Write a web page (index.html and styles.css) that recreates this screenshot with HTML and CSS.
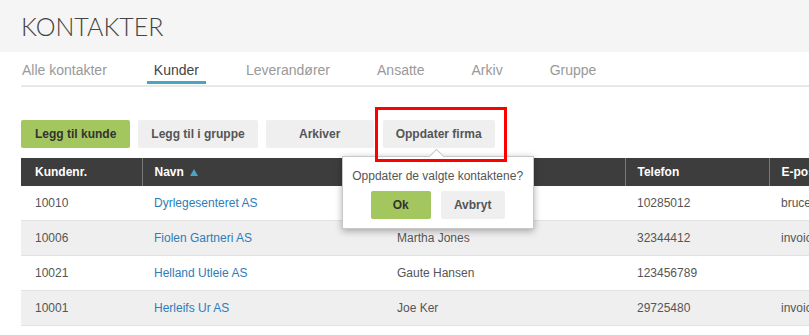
FILE: index.html
```html
<!DOCTYPE html>
<html>
  <head>
    <title>Kontakter</title>
    <link rel="stylesheet" href="styles.css">
  </head>
  <body>
    <header class="page-header">
      <h1>KONTAKTER</h1>
    </header>

    <nav class="tabs">
      <div class="tab-list">
        <a class="tab" href="#">Alle kontakter</a>
        <a class="tab active" href="#">Kunder</a>
        <a class="tab" href="#">Leverandører</a>
        <a class="tab" href="#">Ansatte</a>
        <a class="tab" href="#">Arkiv</a>
        <a class="tab" href="#">Gruppe</a>
      </div>
    </nav>

    <div class="content">
      <div class="toolbar">
        <button class="btn btn-green">Legg til kunde</button>
        <button class="btn">Legg til i gruppe</button>
        <button class="btn">Arkiver</button>
        <div class="confirm">
          <button class="btn">Oppdater firma</button>
          <div class="popover">
            <span class="popover-arrow"></span>
            <p class="popover-text">Oppdater de valgte kontaktene?</p>
            <div class="popover-actions">
              <button class="btn btn-green btn-ok">Ok</button>
              <button class="btn btn-cancel">Avbryt</button>
            </div>
          </div>
          <div class="highlight"></div>
        </div>
      </div>

      <table class="contacts">
        <colgroup>
          <col class="col-nr">
          <col class="col-name">
          <col class="col-person">
          <col class="col-phone">
          <col class="col-mail">
        </colgroup>
        <thead>
          <tr>
            <th>Kundenr.</th>
            <th>Navn <span class="sort-up"></span></th>
            <th>Kontaktperson</th>
            <th>Telefon</th>
            <th>E-post</th>
          </tr>
        </thead>
        <tbody>
          <tr>
            <td>10010</td>
            <td><a href="#">Dyrlegesenteret AS</a></td>
            <td>Bruce Wayne</td>
            <td>10285012</td>
            <td>bruce@dyrlegesenteret.no</td>
          </tr>
          <tr>
            <td>10006</td>
            <td><a href="#">Fiolen Gartneri AS</a></td>
            <td>Martha Jones</td>
            <td>32344412</td>
            <td>invoice@fiolen.no</td>
          </tr>
          <tr>
            <td>10021</td>
            <td><a href="#">Helland Utleie AS</a></td>
            <td>Gaute Hansen</td>
            <td>123456789</td>
            <td></td>
          </tr>
          <tr>
            <td>10001</td>
            <td><a href="#">Herleifs Ur AS</a></td>
            <td>Joe Ker</td>
            <td>29725480</td>
            <td>invoice@herleifsur.no</td>
          </tr>
        </tbody>
      </table>
    </div>
  </body>
</html>
```

FILE: styles.css
```css
html, body {
  margin: 0;
  overflow: hidden;
}

body {
  font-family: "Liberation Sans", Arial, sans-serif;
  color: #555;
  background: #fff;
}

.page-header {
  height: 52px;
  padding-left: 21px;
  background: #f5f5f5;
}

.page-header h1 {
  margin: 0;
  font-family: Lato, sans-serif;
  font-weight: 300;
  font-size: 25px;
  line-height: 52px;
  color: #444;
}

.tabs {
  margin-left: 21px;
  border-bottom: 2px solid #e8e8e8;
}

.tab-list {
  display: flex;
  gap: 33px;
  margin-left: -6px;
  padding-bottom: 1px;
}

.tab {
  padding: 7px 7px 0;
  font-size: 14px;
  line-height: 22px;
  color: #999;
  text-decoration: none;
  border-bottom: 3px solid transparent;
}

.tab.active {
  color: #444;
  border-bottom-color: #4aa4c2;
}

.content {
  padding-left: 21px;
}

.toolbar {
  display: flex;
  gap: 8px;
  margin-top: 33px;
  margin-bottom: 10px;
}

.btn {
  height: 28px;
  min-width: 108px;
  padding: 0 13px;
  border: 0;
  border-radius: 2px;
  background: #efefef;
  color: #555;
  font-family: "Liberation Sans", Arial, sans-serif;
  font-weight: bold;
  font-size: 12px;
}

.btn-green {
  padding: 0 14px;
  background: #a3c65f;
  color: #333;
}

.confirm {
  position: relative;
  margin-left: 1px;
}

.popover {
  position: absolute;
  top: 36px;
  left: -41px;
  width: 192px;
  box-sizing: border-box;
  padding: 10px 0 9px;
  background: #fff;
  border: 1px solid #c8c8c8;
  box-shadow: 0 2px 7px rgba(0, 0, 0, 0.32);
  z-index: 2;
}

.popover-arrow {
  position: absolute;
  top: -6px;
  left: 88px;
  width: 10px;
  height: 10px;
  background: #fff;
  border-top: 1px solid #c8c8c8;
  border-left: 1px solid #c8c8c8;
  transform: rotate(45deg);
}

.popover-text {
  margin: 0;
  text-align: center;
  font-size: 12px;
  line-height: 18px;
  color: #555;
}

.popover-actions {
  display: flex;
  justify-content: center;
  gap: 10px;
  margin-top: 6px;
}

.btn-ok {
  min-width: 60px;
}

.btn-cancel {
  min-width: 64px;
}

.highlight {
  position: absolute;
  top: -13px;
  left: -8px;
  width: 132px;
  height: 55px;
  box-sizing: border-box;
  border: 3px solid #f00;
  z-index: 3;
}

.contacts {
  width: 1000px;
  table-layout: fixed;
  border-collapse: collapse;
  font-size: 12px;
}

.col-nr { width: 121px; }
.col-name { width: 243px; }
.col-person { width: 240px; }
.col-phone { width: 144px; }
.col-mail { width: 252px; }

.contacts th {
  height: 28px;
  padding: 0 12px;
  background: #3d3d3d;
  color: #fff;
  font-weight: bold;
  text-align: left;
  border-left: 1px solid #7a7a7a;
}

.contacts th:first-child,
.contacts td:first-child {
  padding-left: 14px;
  border-left: 0;
}

.contacts td {
  height: 34px;
  padding: 0 12px;
  border-bottom: 1px solid #e2e2e2;
  white-space: nowrap;
  overflow: hidden;
}

.contacts tbody tr:nth-child(even) td {
  background: #efefef;
}

.contacts a {
  color: #2e7db8;
  text-decoration: none;
}

.sort-up {
  display: inline-block;
  margin-left: 3px;
  width: 0;
  height: 0;
  border-left: 4px solid transparent;
  border-right: 4px solid transparent;
  border-bottom: 7px solid #4aa4c2;
  vertical-align: 0;
}
```
